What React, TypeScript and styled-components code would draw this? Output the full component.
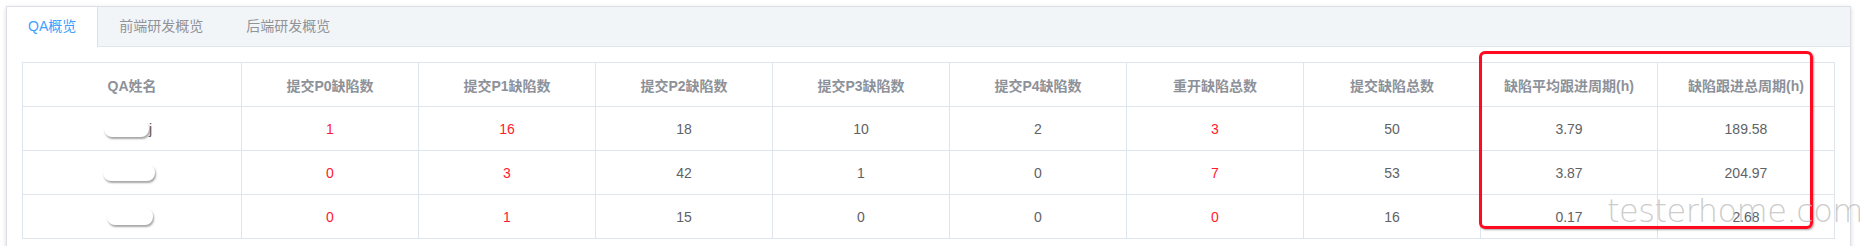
import React from "react";
import styled, { createGlobalStyle } from "styled-components";

const Global = createGlobalStyle`
  html, body { margin: 0; padding: 0; background: #fff; overflow: hidden; }
  body { font-family: "Liberation Sans", "Noto Sans CJK SC", sans-serif; }
`;

const Page = styled.div`
  position: relative;
  width: 1860px;
  height: 246px;
  padding: 6px 0 0 6px;
  box-sizing: border-box;
`;

const Card = styled.div`
  width: 1845px;
  box-sizing: border-box;
  border: 1px solid #dcdfe6;
  background: #fff;
  box-shadow: 0 2px 4px 0 rgba(0, 0, 0, 0.12), 0 0 6px 0 rgba(0, 0, 0, 0.04);
`;

const TabBar = styled.div`
  display: flex;
  height: 39px;
  background: #f2f5f8;
  border-bottom: 1px solid #e1e6ed;
`;

const Tab = styled.div<{ $active?: boolean }>`
  line-height: 39px;
  padding: 0 21px;
  font-size: 14px;
  color: ${(p) => (p.$active ? "#409eff" : "#909399")};
  background: ${(p) => (p.$active ? "#fff" : "transparent")};
  border-right: 1px solid ${(p) => (p.$active ? "#dcdfe6" : "transparent")};
  margin-bottom: ${(p) => (p.$active ? "-1px" : "0")};
  height: ${(p) => (p.$active ? "40px" : "39px")};
  font-family: "Liberation Sans", "Noto Sans CJK SC", sans-serif;
`;

const Body = styled.div`
  padding: 15px;
  height: 200px;
`;

const Table = styled.table`
  border-collapse: collapse;
  table-layout: fixed;
  width: 1813px;
  font-size: 14px;
`;

const Th = styled.th`
  height: 43px;
  border: 1px solid #dfe5ec;
  color: #8d9199;
  font-weight: 600;
  text-align: center;
  padding: 0;
  font-family: "Liberation Sans", "Noto Sans CJK SC", sans-serif;
`;

const Td = styled.td<{ $red?: boolean }>`
  height: 43px;
  border: 1px solid #dfe5ec;
  color: ${(p) => (p.$red ? "#ff1a2e" : "#606266")};
  text-align: center;
  padding: 0;
`;

const NameWrap = styled.div<{ $shift: number }>`
  display: flex;
  align-items: center;
  justify-content: center;
  transform: translateX(${(p) => p.$shift}px);
`;

const Pill = styled.span<{ $w: number }>`
  display: inline-block;
  width: ${(p) => p.$w}px;
  height: 17px;
  border-radius: 8px;
  background: #fff;
  box-shadow: 1px 2px 2px rgba(0, 0, 0, 0.35);
`;

const Tail = styled.span`
  color: #555;
  font-size: 14px;
`;

const Highlight = styled.div`
  position: absolute;
  left: 1479px;
  top: 51px;
  width: 334px;
  height: 178px;
  box-sizing: border-box;
  border: 3px solid #ff0a1e;
  border-radius: 6px;
  box-shadow: 1px 1px 2px rgba(0, 0, 0, 0.35), inset 0 0 1px rgba(0, 0, 0, 0.2);
  pointer-events: none;
`;

const Watermark = styled.div`
  position: absolute;
  left: 1607px;
  top: 195px;
  line-height: 1;
  font-family: "DejaVu Sans", sans-serif;
  font-weight: 200;
  font-size: 32px;
  letter-spacing: -0.5px;
  color: rgba(190, 190, 190, 0.8);
  white-space: nowrap;
  pointer-events: none;
`;

const headers = [
  "QA姓名",
  "提交P0缺陷数",
  "提交P1缺陷数",
  "提交P2缺陷数",
  "提交P3缺陷数",
  "提交P4缺陷数",
  "重开缺陷总数",
  "提交缺陷总数",
  "缺陷平均跟进周期(h)",
  "缺陷跟进总周期(h)",
];

type Row = {
  pill: number;
  shift: number;
  tail?: string;
  vals: (string | number)[];
};

const rows: Row[] = [
  { pill: 45, shift: -4, tail: "j", vals: [1, 16, 18, 10, 2, 3, 50, "3.79", "189.58"] },
  { pill: 52, shift: -3, vals: [0, 3, 42, 1, 0, 7, 53, "3.87", "204.97"] },
  { pill: 46, shift: -2, vals: [0, 1, 15, 0, 0, 0, 16, "0.17", "2.68"] },
];

const redCols = new Set([0, 1, 5]);

export default function App() {
  return (
    <Page>
      <Global />
      <Card>
        <TabBar>
          <Tab $active>QA概览</Tab>
          <Tab>前端研发概览</Tab>
          <Tab>后端研发概览</Tab>
        </TabBar>
        <Body>
          <Table>
            <colgroup>
              <col style={{ width: 219 }} />
              {Array.from({ length: 9 }).map((_, i) => (
                <col key={i} style={{ width: 177 }} />
              ))}
            </colgroup>
            <thead>
              <tr>
                {headers.map((h) => (
                  <Th key={h}>{h}</Th>
                ))}
              </tr>
            </thead>
            <tbody>
              {rows.map((r, ri) => (
                <tr key={ri}>
                  <Td>
                    <NameWrap $shift={r.shift}>
                      <Pill $w={r.pill} />
                      {r.tail && <Tail>{r.tail}</Tail>}
                    </NameWrap>
                  </Td>
                  {r.vals.map((v, ci) => (
                    <Td key={ci} $red={redCols.has(ci)}>
                      {v}
                    </Td>
                  ))}
                </tr>
              ))}
            </tbody>
          </Table>
        </Body>
      </Card>
      <Highlight />
      <Watermark>testerhome.com</Watermark>
    </Page>
  );
}
